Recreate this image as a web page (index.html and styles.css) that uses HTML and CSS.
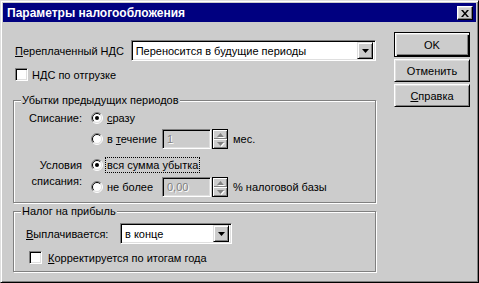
FILE: index.html
```html
<!DOCTYPE html>
<html lang="ru">
<head>
<meta charset="utf-8">
<title>Параметры налогообложения</title>
<link rel="stylesheet" href="styles.css">
</head>
<body>
<div class="window">
  <div class="titlebar">
    <span class="title">Параметры налогообложения</span>
    <span class="close"><svg width="8" height="7" viewBox="0 0 8 7"><path d="M0 0h2l2 2.4L6 0h2L5 3.5 8 7H6L4 4.6 2 7H0l3-3.5z" fill="#000"/></svg></span>
  </div>
  <div class="content">
    <div class="main">
      <div class="row-vat">
        <span class="lbl-vat"><u>П</u>ереплаченный НДС</span>
        <div class="combo combo-vat">
          <span class="combo-text">Переносится в будущие периоды</span>
          <span class="dd-btn"><svg width="7" height="4" viewBox="0 0 7 4"><path d="M0 0h7L3.5 4z" fill="#000"/></svg></span>
        </div>
      </div>
      <div class="check-row check-vat">
        <span class="checkbox"></span><span>НДС по отгрузке</span>
      </div>

      <div class="group group-loss">
        <span class="legend">Убытки предыдущих периодов</span>
        <div class="lrow lrow-1">
          <span class="side-label">Списание:</span>
          <span class="radio"><svg width="12" height="12" viewBox="0 0 12 12"><circle cx="6" cy="6" r="5" fill="#fff"/><path d="M2.1 9.9A5.5 5.5 0 0 1 9.9 2.1" stroke="#808080" fill="none"/><path d="M2.8 9.2A4.5 4.5 0 0 1 9.2 2.8" stroke="#000" fill="none"/><path d="M9.9 2.1A5.5 5.5 0 0 1 2.1 9.9" stroke="#fff" fill="none"/><path d="M9.2 2.8A4.5 4.5 0 0 1 2.8 9.2" stroke="#dfdfdf" fill="none"/><circle cx="6" cy="6" r="2" fill="#000"/></svg></span>
          <span class="opt-text"><u>с</u>разу</span>
        </div>
        <div class="lrow lrow-2">
          <span class="side-label"></span>
          <span class="radio"><svg width="12" height="12" viewBox="0 0 12 12"><circle cx="6" cy="6" r="5" fill="#fff"/><path d="M2.1 9.9A5.5 5.5 0 0 1 9.9 2.1" stroke="#808080" fill="none"/><path d="M2.8 9.2A4.5 4.5 0 0 1 9.2 2.8" stroke="#000" fill="none"/><path d="M9.9 2.1A5.5 5.5 0 0 1 2.1 9.9" stroke="#fff" fill="none"/><path d="M9.2 2.8A4.5 4.5 0 0 1 2.8 9.2" stroke="#dfdfdf" fill="none"/></svg></span>
          <span class="opt-text opt-fixed">в <u>т</u>ечение</span>
          <span class="field field-disabled">1</span>
          <span class="spin">
            <span class="spin-btn"><svg width="7" height="4" viewBox="0 0 7 4"><path d="M0 4h7L3.5 0z" fill="#808080"/></svg></span>
            <span class="spin-btn"><svg width="7" height="4" viewBox="0 0 7 4"><path d="M0 0h7L3.5 4z" fill="#808080"/></svg></span>
          </span>
          <span class="unit">мес.</span>
        </div>
        <div class="lpair">
          <span class="side-label side-two">Условия<br>списания:</span>
          <div class="lpair-rows">
            <div class="lrow lrow-3">
              <span class="radio"><svg width="12" height="12" viewBox="0 0 12 12"><circle cx="6" cy="6" r="5" fill="#fff"/><path d="M2.1 9.9A5.5 5.5 0 0 1 9.9 2.1" stroke="#808080" fill="none"/><path d="M2.8 9.2A4.5 4.5 0 0 1 9.2 2.8" stroke="#000" fill="none"/><path d="M9.9 2.1A5.5 5.5 0 0 1 2.1 9.9" stroke="#fff" fill="none"/><path d="M9.2 2.8A4.5 4.5 0 0 1 2.8 9.2" stroke="#dfdfdf" fill="none"/><circle cx="6" cy="6" r="2" fill="#000"/></svg></span>
              <span class="opt-text focus">вся сумма убытка</span>
            </div>
            <div class="lrow lrow-4">
              <span class="radio"><svg width="12" height="12" viewBox="0 0 12 12"><circle cx="6" cy="6" r="5" fill="#fff"/><path d="M2.1 9.9A5.5 5.5 0 0 1 9.9 2.1" stroke="#808080" fill="none"/><path d="M2.8 9.2A4.5 4.5 0 0 1 9.2 2.8" stroke="#000" fill="none"/><path d="M9.9 2.1A5.5 5.5 0 0 1 2.1 9.9" stroke="#fff" fill="none"/><path d="M9.2 2.8A4.5 4.5 0 0 1 2.8 9.2" stroke="#dfdfdf" fill="none"/></svg></span>
              <span class="opt-text opt-fixed">не более</span>
              <span class="field field-disabled">0,00</span>
              <span class="spin">
                <span class="spin-btn"><svg width="7" height="4" viewBox="0 0 7 4"><path d="M0 4h7L3.5 0z" fill="#808080"/></svg></span>
                <span class="spin-btn"><svg width="7" height="4" viewBox="0 0 7 4"><path d="M0 0h7L3.5 4z" fill="#808080"/></svg></span>
              </span>
              <span class="unit">% налоговой базы</span>
            </div>
          </div>
        </div>
      </div>

      <div class="group group-tax">
        <span class="legend">Налог на прибыль</span>
        <div class="row-pay">
          <span class="lbl-pay"><u>В</u>ыплачивается:</span>
          <div class="combo combo-pay">
            <span class="combo-text">в конце</span>
            <span class="dd-btn"><svg width="7" height="4" viewBox="0 0 7 4"><path d="M0 0h7L3.5 4z" fill="#000"/></svg></span>
          </div>
        </div>
        <div class="check-row check-year">
          <span class="checkbox"></span><span><u>К</u>орректируется по итогам года</span>
        </div>
      </div>
    </div>

    <div class="buttons">
      <span class="btn btn-default">OK</span>
      <span class="btn">Отменить</span>
      <span class="btn"><u>С</u>правка</span>
    </div>
  </div>
</div>
</body>
</html>
```

FILE: styles.css
```css
* { box-sizing: border-box; }
html, body { margin: 0; padding: 0; }
body {
  width: 479px;
  height: 283px;
  overflow: hidden;
  background: #cccccc;
  font-family: "Liberation Sans", Arial, sans-serif;
  font-size: 11px;
  color: #000;
}
u { text-decoration: underline; text-underline-offset: 1px; }

.window {
  width: 479px;
  height: 283px;
  background: #cccccc;
  border: 1px solid;
  border-color: #dfdfdf #000 #000 #dfdfdf;
  box-shadow: inset 1px 1px #fff, inset -1px -1px #808080;
  padding: 2px;
  display: flex;
  flex-direction: column;
}

.titlebar {
  height: 19px;
  background: #000080;
  display: flex;
  align-items: center;
  justify-content: space-between;
  padding: 0 3px 0 4px;
  flex: none;
}
.title { color: #fff; font-weight: bold; font-size: 12px; }
.close {
  width: 16px;
  height: 14px;
  background: #cccccc;
  border: 1px solid;
  border-color: #fff #000 #000 #fff;
  box-shadow: inset -1px -1px #808080, inset 1px 1px #dfdfdf;
  display: flex;
  align-items: center;
  justify-content: center;
  padding-top: 1px;
}
.close svg { display: block; }

.content {
  display: flex;
  gap: 18px;
  padding: 0 6px 0 10px;
  flex: 1;
}
.main {
  width: 363px;
  padding-top: 18px;
  display: flex;
  flex-direction: column;
}

/* sunken fields */
.combo, .field, .checkbox {
  border: 1px solid;
  border-color: #808080 #fff #fff #808080;
  box-shadow: inset 1px 1px #000, inset -1px -1px #dfdfdf;
  background: #fff;
}

.row-vat {
  display: flex;
  align-items: center;
  height: 21px;
}
.lbl-vat { width: 118px; padding-left: 2px; }
.combo {
  display: flex;
  align-items: center;
  height: 21px;
  padding: 2px 2px 2px 4px;
}
.combo-vat { width: 246px; }
.combo-text { flex: 1; white-space: nowrap; }
.dd-btn {
  width: 16px;
  height: 17px;
  background: #cccccc;
  border: 1px solid;
  border-color: #dfdfdf #000 #000 #dfdfdf;
  box-shadow: inset 1px 1px #fff, inset -1px -1px #808080;
  display: flex;
  align-items: center;
  justify-content: center;
}
.dd-btn svg { display: block; }

.check-row {
  display: flex;
  align-items: center;
  gap: 4px;
  height: 13px;
}
.checkbox { width: 13px; height: 13px; flex: none; }
.check-vat { margin-top: 7px; padding-left: 2px; }

.group {
  border: 1px solid #808080;
  box-shadow: inset 1px 1px #fff, 1px 1px #fff;
  display: flex;
  flex-direction: column;
}
.legend {
  display: block;
  width: fit-content;
  margin: -8px 0 0 7px;
  padding: 0 1px;
  background: #cccccc;
  line-height: 14px;
}
.group-loss { margin-top: 19px; height: 103px; }
.group-tax { margin-top: 8px; height: 61px; }

.lrow { display: flex; align-items: center; }
.lrow-1 { height: 22px; }
.lrow-2 { height: 20px; }
.lrow-3 { height: 20px; }
.lrow-4 { height: 20px; margin-top: 2px; }
.side-label {
  width: 77px;
  flex: none;
  text-align: right;
  padding-right: 9px;
}
.side-two { line-height: 16px; padding-top: 2px; }
.lpair { display: flex; margin-top: 6px; }
.lpair-rows { display: flex; flex-direction: column; }
.radio { width: 12px; height: 12px; flex: none; }
.radio svg { display: block; }
.opt-text { margin-left: 4px; white-space: nowrap; }
.opt-fixed { width: 55px; }
.focus {
  outline: 1px dotted #000;
  outline-offset: 0;
  line-height: 14px;
  padding: 0 1px;
  margin-left: 3px;
}

.field {
  width: 49px;
  height: 20px;
  display: flex;
  align-items: center;
  padding: 0 4px;
}
.field-disabled {
  background: #cccccc;
  color: #808080;
  text-shadow: 1px 1px #fff;
}
.spin {
  width: 16px;
  height: 20px;
  margin-left: 1px;
  border: 1px solid #000;
  display: flex;
  flex-direction: column;
  flex: none;
}
.spin-btn {
  flex: 1;
  background: #cccccc;
  box-shadow: inset 1px 1px #fff, inset -1px -1px #808080;
  display: flex;
  align-items: center;
  justify-content: center;
}
.spin-btn svg { display: block; filter: drop-shadow(1px 1px 0 #fff); }
.unit { margin-left: 5px; white-space: nowrap; }

.row-pay {
  display: flex;
  align-items: center;
  margin-top: 5px;
  height: 21px;
}
.lbl-pay { width: 106px; padding-left: 12px; }
.combo-pay { width: 112px; }
.check-year { margin-top: 7px; padding-left: 15px; gap: 6px; }

.buttons {
  width: 76px;
  padding-top: 10px;
  display: flex;
  flex-direction: column;
  gap: 2px;
}
.btn {
  height: 23px;
  display: flex;
  align-items: center;
  justify-content: center;
  background: #cccccc;
  border: 1px solid;
  border-color: #fff #000 #000 #fff;
  box-shadow: inset 1px 1px #dfdfdf, inset -1px -1px #808080;
}
.btn-default {
  height: 25px;
  border: 1px solid #000;
  box-shadow: inset 1px 1px #fff, inset 2px 2px #dfdfdf, inset -1px -1px #000, inset -2px -2px #808080;
}
```
